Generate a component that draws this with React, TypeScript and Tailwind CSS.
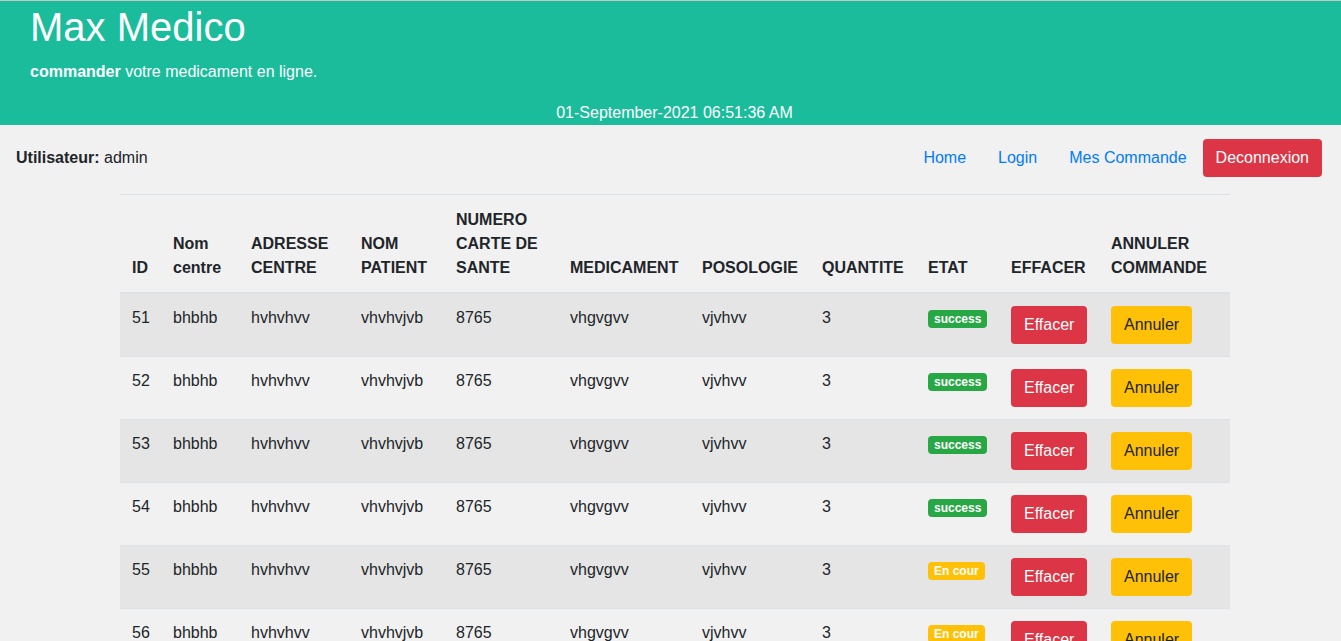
const rows = [
  { id: 51, etat: 'success' },
  { id: 52, etat: 'success' },
  { id: 53, etat: 'success' },
  { id: 54, etat: 'success' },
  { id: 55, etat: 'En cour' },
  { id: 56, etat: 'En cour' },
  { id: 57, etat: 'En cour' },
];

const cols = [
  { label: 'ID', w: 'w-[41px]' },
  { label: 'Nom centre', w: 'w-[78px]' },
  { label: 'ADRESSE CENTRE', w: 'w-[110px]' },
  { label: 'NOM PATIENT', w: 'w-[95px]' },
  { label: 'NUMERO CARTE DE SANTE', w: 'w-[114px]' },
  { label: 'MEDICAMENT', w: 'w-[132px]' },
  { label: 'POSOLOGIE', w: 'w-[120px]' },
  { label: 'QUANTITE', w: 'w-[106px]' },
  { label: 'ETAT', w: 'w-[83px]' },
  { label: 'EFFACER', w: 'w-[100px]' },
  { label: 'ANNULER COMMANDE', w: 'w-[131px]' },
];

function Badge({ etat }: { etat: string }) {
  const color = etat === 'success' ? 'bg-[#28a745]' : 'bg-[#ffc107]';
  return (
    <span
      className={`${color} inline-block rounded-[4px] px-[6px] py-[3px] text-[12px] font-bold leading-3 text-white align-baseline`}
    >
      {etat}
    </span>
  );
}

export default function App() {
  return (
    <div
      className="h-screen overflow-hidden bg-[#f1f1f1] text-[16px] leading-6 text-[#212529]"
      style={{ fontFamily: '"Liberation Sans", Arial, sans-serif' }}
    >
      {/* header */}
      <div className="border-t border-[#c8c8c8] bg-[#1abc9c] pt-[2px] text-white">
        <h1 className="pl-[30px] text-[40px] leading-[48px]">Max Medico</h1>
        <p className="mt-[9px] pl-[30px]">
          <b>commander</b> votre medicament en ligne.
        </p>
        <div className="mt-[17px] pl-[8px] text-center">01-September-2021 06:51:36 AM</div>
      </div>

      {/* nav */}
      <div className="flex items-center justify-between pb-[13px] pl-[16px] pr-[19px] pt-[14px]">
        <div>
          <b>Utilisateur:</b> admin
        </div>
        <div className="flex items-center">
          <a className="px-4 text-[#007bff]">Home</a>
          <a className="px-4 text-[#007bff]">Login</a>
          <a className="px-4 text-[#007bff]">Mes Commande</a>
          <button className="rounded-[4px] bg-[#dc3545] px-[13px] py-[7px] text-white">Deconnexion</button>
        </div>
      </div>

      {/* table */}
      <table className="ml-[120px] mt-[4px] w-[1110px] table-fixed border-collapse">
        <thead>
          <tr>
            {cols.map((c) => (
              <th
                key={c.label}
                className={`${c.w} border-t border-b-2 border-[#dee2e6] px-3 pb-3 pt-[13px] text-left align-bottom font-bold`}
              >
                {c.label}
              </th>
            ))}
          </tr>
        </thead>
        <tbody>
          {rows.map((r, i) => (
            <tr key={r.id} className={i % 2 === 0 ? 'bg-[#e5e5e5]' : ''}>
              <td className="border-t border-[#dee2e6] p-3 align-top">{r.id}</td>
              <td className="border-t border-[#dee2e6] p-3 align-top">bhbhb</td>
              <td className="border-t border-[#dee2e6] p-3 align-top">hvhvhvv</td>
              <td className="border-t border-[#dee2e6] p-3 align-top">vhvhvjvb</td>
              <td className="border-t border-[#dee2e6] p-3 align-top">8765</td>
              <td className="border-t border-[#dee2e6] p-3 align-top">vhgvgvv</td>
              <td className="border-t border-[#dee2e6] p-3 align-top">vjvhvv</td>
              <td className="border-t border-[#dee2e6] p-3 align-top">3</td>
              <td className="border-t border-[#dee2e6] p-3 align-top">
                <Badge etat={r.etat} />
              </td>
              <td className="border-t border-[#dee2e6] p-3 align-top">
                <button className="rounded-[4px] bg-[#dc3545] px-[13px] py-[7px] text-white">Effacer</button>
              </td>
              <td className="border-t border-[#dee2e6] p-3 align-top">
                <button className="rounded-[4px] bg-[#ffc107] px-[13px] py-[7px] text-[#212529]">Annuler</button>
              </td>
            </tr>
          ))}
        </tbody>
      </table>
    </div>
  );
}
